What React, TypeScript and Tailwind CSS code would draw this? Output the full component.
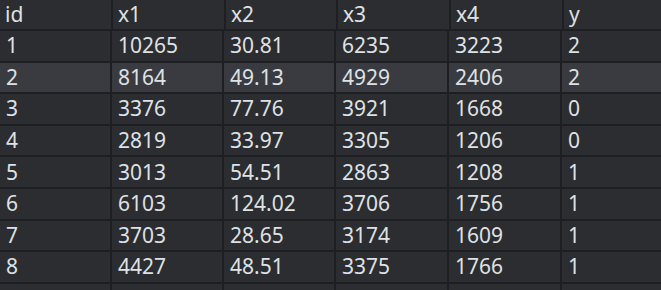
const headers = ["id", "x1", "x2", "x3", "x4", "y"];

const rows = [
  ["1", "10265", "30.81", "6235", "3223", "2"],
  ["2", "8164", "49.13", "4929", "2406", "2"],
  ["3", "3376", "77.76", "3921", "1668", "0"],
  ["4", "2819", "33.97", "3305", "1206", "0"],
  ["5", "3013", "54.51", "2863", "1208", "1"],
  ["6", "6103", "124.02", "3706", "1756", "1"],
  ["7", "3703", "28.65", "3174", "1609", "1"],
  ["8", "4427", "48.51", "3375", "1766", "1"],
];

const font = { fontFamily: '"Segoe UI", "Noto Sans", sans-serif' };

export default function App() {
  return (
    <div
      className="w-[661px] h-[290px] overflow-hidden bg-[#2b2d30] text-[#dfe1e5] text-[21px] leading-none"
      style={font}
    >
      {/* header */}
      <div className="grid grid-cols-[113px_113px_112px_113px_113px_1fr] h-[31px] border-b-2 border-[#1e1f22]">
        {headers.map((h, i) => (
          <div
            key={h}
            className={`flex items-center pl-[5px] pb-[1px] ${i < 5 ? "border-r-2 border-[#1e1f22]" : ""}`}
          >
            {h}
          </div>
        ))}
      </div>

      {rows.map((r, ri) => (
        <div
          key={ri}
          className={`grid grid-cols-[112px_112px_112px_113px_113px_1fr] h-[31.6px] border-b-2 border-[#1e1f22] ${
            ri === 1 ? "bg-[#393b40]" : ""
          }`}
        >
          {r.map((c, ci) => (
            <div
              key={ci}
              className={`flex items-center pl-[6px] ${ci < 5 ? "border-r-2 border-[#1e1f22]" : ""}`}
            >
              {c}
            </div>
          ))}
        </div>
      ))}

      {/* next row peeking */}
      <div className="grid grid-cols-[112px_112px_112px_113px_113px_1fr] h-[31px]">
        {headers.map((h, i) => (
          <div key={h} className={i < 5 ? "border-r-2 border-[#1e1f22]" : ""} />
        ))}
      </div>
    </div>
  );
}
